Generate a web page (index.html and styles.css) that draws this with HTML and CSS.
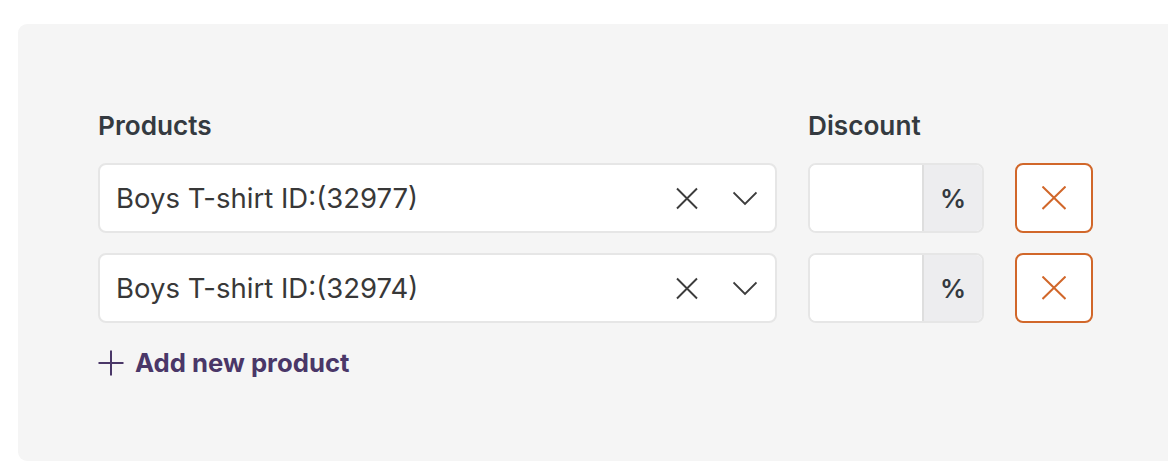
FILE: index.html
```html
<!DOCTYPE html>
<html lang="en">
<head>
<meta charset="utf-8">
<title>Products discount</title>
<link rel="stylesheet" href="styles.css">
</head>
<body>
<div class="panel">
  <div class="grid">
    <div class="label">Products</div>
    <div class="label">Discount</div>
    <div></div>

    <div class="select">
      <span class="select-text">Boys T-shirt ID:(32977)</span>
      <svg class="clear" viewBox="0 0 24 24" width="24" height="24"><path d="M2 2.5 L22 22.5 M22 2.5 L2 22.5"/></svg>
      <svg class="chev" viewBox="0 0 24 24" width="24" height="24"><path d="M0.5 6.5 L12 18 L23.5 6.5"/></svg>
    </div>
    <div class="discount">
      <span class="discount-input"></span>
      <span class="addon">%</span>
    </div>
    <button class="remove" type="button">
      <svg viewBox="0 0 24 24" width="24" height="24"><path d="M0.5 0.5 L23.5 23 M23.5 0.5 L0.5 23"/></svg>
    </button>

    <div class="select">
      <span class="select-text">Boys T-shirt ID:(32974)</span>
      <svg class="clear" viewBox="0 0 24 24" width="24" height="24"><path d="M2 2.5 L22 22.5 M22 2.5 L2 22.5"/></svg>
      <svg class="chev" viewBox="0 0 24 24" width="24" height="24"><path d="M0.5 6.5 L12 18 L23.5 6.5"/></svg>
    </div>
    <div class="discount">
      <span class="discount-input"></span>
      <span class="addon">%</span>
    </div>
    <button class="remove" type="button">
      <svg viewBox="0 0 24 24" width="24" height="24"><path d="M0.5 0.5 L23.5 23 M23.5 0.5 L0.5 23"/></svg>
    </button>
  </div>
  <div class="add">
    <svg class="plus" viewBox="0 0 26 26" width="26" height="26"><path d="M13 0.5 V25.5 M0.5 13 H25.5"/></svg>
    <span>Add new product</span>
  </div>
</div>
</body>
</html>
```

FILE: styles.css
```css
* { box-sizing: border-box; }
html, body {
  margin: 0;
  padding: 0;
  background: #ffffff;
  overflow: hidden;
  font-family: Inter, "Noto Sans", "Liberation Sans", sans-serif;
}
.panel {
  margin: 24px -40px 0 18px;
  height: 437px;
  background: #f5f5f5;
  border-radius: 9px;
  padding: 86px 0 0 80px;
}
.grid {
  display: grid;
  grid-template-columns: 679px 176px 78px;
  column-gap: 31px;
  row-gap: 20px;
  grid-auto-rows: 70px;
  grid-template-rows: 33px;
}
.label {
  font-size: 26.2px;
  line-height: 32px;
  font-weight: 600;
  color: #343a40;
}
.select {
  display: flex;
  align-items: center;
  background: #fff;
  border: 2px solid #e6e6e6;
  border-radius: 8px;
  padding: 0 18px 0 16px;
}
.select-text {
  flex: 1;
  font-size: 27.5px;
  color: #383838;
  line-height: 32px;
}
.clear {
  fill: none;
  stroke: #3c3c3c;
  stroke-width: 1.9;
  margin-right: 34px;
}
.chev {
  fill: none;
  stroke: #3c3c3c;
  stroke-width: 1.9;
}
.discount {
  display: flex;
  border: 2px solid #e6e6e6;
  border-radius: 8px;
  overflow: hidden;
  background: #fff;
}
.discount-input {
  flex: 1;
  background: #fff;
}
.addon {
  width: 60px;
  background: #ededef;
  border-left: 2px solid #dedede;
  display: flex;
  align-items: center;
  justify-content: center;
  font-size: 26px;
  font-weight: 600;
  color: #343a40;
}
.remove {
  margin: 0;
  padding: 0;
  display: flex;
  align-items: center;
  justify-content: center;
  background: #fff;
  border: 2px solid #d1672a;
  border-radius: 8px;
}
.remove svg {
  fill: none;
  stroke: #d1672a;
  stroke-width: 2;
}
.add {
  margin-top: 24px;
  display: flex;
  align-items: center;
  gap: 11px;
  font-size: 25.7px;
  line-height: 32px;
  font-weight: 700;
  color: #4a3768;
}
.plus {
  fill: none;
  stroke: #4a3768;
  stroke-width: 2;
}
```
